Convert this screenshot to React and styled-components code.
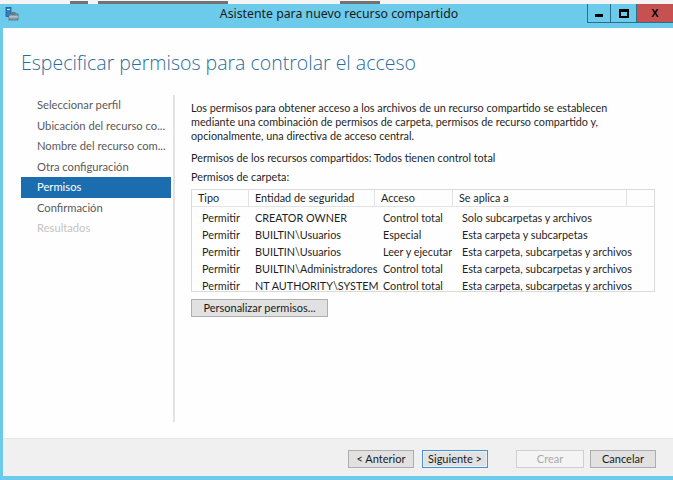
import styled, { createGlobalStyle } from "styled-components";

const GlobalStyle = createGlobalStyle`
  html, body { margin: 0; padding: 0; background: #ffffff; }
  body { font-family: Lato, "Noto Sans", sans-serif; }
  #root { width: 673px; height: 480px; overflow: hidden; }
`;

const Screen = styled.div`
  width: 673px;
  height: 480px;
  display: flex;
  flex-direction: column;
  background: #ffffff;
`;

const BehindStrip = styled.div`
  height: 4px;
  background: #f4f4f4;
  display: flex;
  padding-left: 70px;
  align-items: flex-end;
`;

const BehindChunk = styled.div`
  height: 3px;
  width: ${(p) => p.w}px;
  margin-left: ${(p) => p.ml}px;
  background: #3a3a3a;
  opacity: 0.7;
`;

const Frame = styled.div`
  flex: 1;
  display: flex;
  flex-direction: column;
  background: #6ccbea;
  padding-left: 3px;
  padding-bottom: 4px;
`;

const TitleBar = styled.div`
  height: 24px;
  display: flex;
  align-items: flex-start;
`;

const AppIcon = styled.svg`
  width: 14px;
  height: 14px;
  margin: 3px 0 0 2px;
`;

const TitleText = styled.div`
  flex: 1;
  text-align: center;
  font-family: "Noto Sans", sans-serif;
  font-size: 12.3px;
  color: #1a1a1a;
  line-height: 20px;
  padding-left: 72px;
`;

const WinButtons = styled.div`
  display: flex;
  height: 19px;
`;

const WinButton = styled.div`
  width: ${(p) => p.w}px;
  height: 19px;
  display: flex;
  align-items: center;
  justify-content: center;
  background: ${(p) => (p.close ? "#c75050" : "transparent")};
  border-left: 1px solid #2a6f8a;
  border-bottom: 1px solid #2a6f8a;
  box-sizing: border-box;
  font-family: "Liberation Sans", sans-serif;
  font-size: 11px;
  font-weight: bold;
  color: #000;
`;

const MinGlyph = styled.div`
  width: 8px;
  height: 3px;
  background: #000;
  margin-top: 5px;
`;

const MaxGlyph = styled.div`
  width: 6px;
  height: 4px;
  border: 2px solid #000;
  border-top-width: 3px;
`;

const Client = styled.div`
  flex: 1;
  display: flex;
  flex-direction: column;
  background: #fefefe;
`;

const Heading = styled.h1`
  margin: 0;
  padding: 21px 0 0 18px;
  height: 46px;
  font-size: 19.5px;
  font-weight: 300;
  color: #2a6d9c;
  font-family: "Open Sans", "Noto Sans", sans-serif;
  box-sizing: content-box;
`;

const Body = styled.div`
  display: flex;
  height: 327px;
`;

const Nav = styled.div`
  width: 150px;
  margin-left: 18px;
  display: flex;
  flex-direction: column;
`;

const NavItem = styled.div`
  height: 20.5px;
  line-height: 20.5px;
  padding-left: 16px;
  font-size: 11.2px;
  white-space: nowrap;
  color: ${(p) => (p.selected ? "#ffffff" : p.disabled ? "#c4c4c4" : "#5a5a5a")};
  background: ${(p) => (p.selected ? "#1c6cb0" : "transparent")};
`;

const Separator = styled.div`
  width: 2px;
  background: #e3e3e3;
  margin-left: 2px;
`;

const Main = styled.div`
  flex: 1;
  padding: 6px 18px 0 16px;
  font-size: 10.8px;
  color: #1e1e1e;
`;

const Para = styled.p`
  margin: 0;
  line-height: 14px;
  width: 440px;
`;

const Line = styled.div`
  margin-top: ${(p) => p.mt}px;
  line-height: 14px;
`;

const Table = styled.div`
  margin-top: 5px;
  width: 464px;
  height: 103px;
  border: 1px solid #dadada;
  box-sizing: border-box;
`;

const Row = styled.div`
  display: grid;
  grid-template-columns: 57px 126px 78px 174px 1fr;
  height: ${(p) => (p.head ? 16 : 17)}px;
  line-height: ${(p) => (p.head ? 16 : 17)}px;
  border-bottom: ${(p) => (p.head ? "1px solid #e3e3e3" : "none")};
  margin-bottom: ${(p) => (p.head ? 2 : 0)}px;
`;

const Cell = styled.div`
  white-space: nowrap;
  padding-left: ${(p) => (p.head ? 6 : p.pad)}px;
  border-right: ${(p) => (p.head && !p.last ? "1px solid #e3e3e3" : "none")};
`;

const Button = styled.button`
  font-family: Lato, "Noto Sans", sans-serif;
  font-size: 11px;
  height: 18px;
  width: ${(p) => p.w}px;
  padding: 0;
  line-height: 14px;
  background: ${(p) => (p.disabled ? "#f4f4f4" : "#e1e1e1")};
  color: ${(p) => (p.disabled ? "#a8a8a8" : "#1a1a1a")};
  border: 1px solid ${(p) => (p.focus ? "#4a90d9" : p.disabled ? "#cfcfcf" : "#adadad")};
  box-shadow: ${(p) => (p.focus ? "inset 0 0 0 1px #e5f1fb" : "none")};
  border-radius: 0;
  margin-left: ${(p) => p.ml || 0}px;
`;

const CustomizeWrap = styled.div`
  margin-top: 7px;
`;

const Footer = styled.div`
  height: 38px;
  margin-top: auto;
  background: #f0f0f0;
  border-top: 1px solid #e6e6e6;
  display: flex;
  align-items: center;
  padding-left: 345px;
  padding-top: 2px;
  box-sizing: border-box;
`;

const rows = [
  ["Permitir", "CREATOR OWNER", "Control total", "Solo subcarpetas y archivos"],
  ["Permitir", "BUILTIN\\Usuarios", "Especial", "Esta carpeta y subcarpetas"],
  ["Permitir", "BUILTIN\\Usuarios", "Leer y ejecutar", "Esta carpeta, subcarpetas y archivos"],
  ["Permitir", "BUILTIN\\Administradores", "Control total", "Esta carpeta, subcarpetas y archivos"],
  ["Permitir", "NT AUTHORITY\\SYSTEM", "Control total", "Esta carpeta, subcarpetas y archivos"],
];

const pads = [10, 6, 8, 9];

const steps = [
  "Seleccionar perfil",
  "Ubicación del recurso co...",
  "Nombre del recurso com...",
  "Otra configuración",
  "Permisos",
  "Confirmación",
  "Resultados",
];

export default function App() {
  return (
    <Screen>
      <GlobalStyle />
      <BehindStrip>
        <BehindChunk w={18} ml={0} />
        <BehindChunk w={130} ml={10} />
        <BehindChunk w={40} ml={112} />
      </BehindStrip>
      <Frame>
        <TitleBar>
          <AppIcon viewBox="0 0 14 14">
            <rect x="1" y="0.5" width="5" height="9" fill="#2f7fc4" stroke="#1d5b91" strokeWidth="0.8" />
            <rect x="2" y="2" width="3" height="1" fill="#cfe6f7" />
            <rect x="4" y="7" width="9" height="6" fill="#8a9aa8" stroke="#5b6a78" strokeWidth="0.8" />
            <rect x="7" y="5.5" width="3" height="1.5" fill="none" stroke="#5b6a78" strokeWidth="0.8" />
            <rect x="4" y="9.5" width="9" height="0.8" fill="#dfe6ec" />
          </AppIcon>
          <TitleText>Asistente para nuevo recurso compartido</TitleText>
          <WinButtons>
            <WinButton w={23}><MinGlyph /></WinButton>
            <WinButton w={26}><MaxGlyph /></WinButton>
            <WinButton w={37} close>X</WinButton>
          </WinButtons>
        </TitleBar>
        <Client>
          <Heading>Especificar permisos para controlar el acceso</Heading>
          <Body>
            <Nav>
              {steps.map((s, i) => (
                <NavItem key={s} selected={i === 4} disabled={i === 6}>
                  {s}
                </NavItem>
              ))}
            </Nav>
            <Separator />
            <Main>
              <Para>
                Los permisos para obtener acceso a los archivos de un recurso compartido se establecen
                mediante una combinación de permisos de carpeta, permisos de recurso compartido y,
                opcionalmente, una directiva de acceso central.
              </Para>
              <Line mt={8}>Permisos de los recursos compartidos: Todos tienen control total</Line>
              <Line mt={5}>Permisos de carpeta:</Line>
              <Table>
                <Row head>
                  <Cell head>Tipo</Cell>
                  <Cell head>Entidad de seguridad</Cell>
                  <Cell head>Acceso</Cell>
                  <Cell head>Se aplica a</Cell>
                  <Cell head last />
                </Row>
                {rows.map((r, i) => (
                  <Row key={i}>
                    {r.map((c, j) => (
                      <Cell key={j} pad={pads[j]}>{c}</Cell>
                    ))}
                    <Cell pad={0} />
                  </Row>
                ))}
              </Table>
              <CustomizeWrap>
                <Button w={137}>Personalizar permisos...</Button>
              </CustomizeWrap>
            </Main>
          </Body>
          <Footer>
            <Button w={66}>&lt; Anterior</Button>
            <Button w={66} ml={8} focus>Siguiente &gt;</Button>
            <Button w={68} ml={28} disabled>Crear</Button>
            <Button w={66} ml={6}>Cancelar</Button>
          </Footer>
        </Client>
      </Frame>
    </Screen>
  );
}
